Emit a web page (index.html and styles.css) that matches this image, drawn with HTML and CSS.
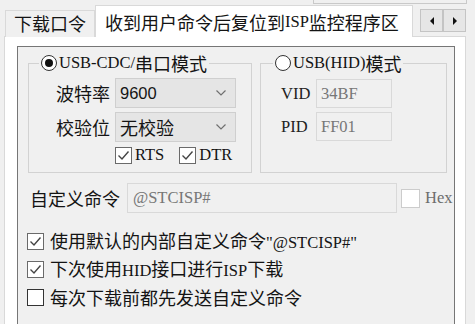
FILE: index.html
```html
<!DOCTYPE html>
<html lang="zh-CN">
<head>
  <meta charset="UTF-8">
  <meta name="viewport" content="width=device-width, initial-scale=1.0">
  <title>ISP 下载设置</title>
  <link rel="stylesheet" href="styles.css">
</head>
<body>
  <div class="top-edge"><div class="top-box"></div></div>

  <div class="tabs">
    <div class="tab">下载口令</div>
    <div class="tab active">收到用户命令后复位到<span class="m">ISP</span>监控程序区</div>
    <div class="tab-scroll">
      <span class="arrow">
        <svg width="6" height="8" viewBox="0 0 6 8"><path d="M5 0 L1 4 L5 8 Z" fill="#111"/></svg>
      </span>
      <span class="arrow">
        <svg width="6" height="8" viewBox="0 0 6 8"><path d="M1 0 L5 4 L1 8 Z" fill="#111"/></svg>
      </span>
    </div>
  </div>

  <div class="page">
    <div class="panel">
      <div class="groups">
        <fieldset class="group group-cdc">
          <legend><span class="radio on"></span><span class="m">USB-CDC/</span>串口模式</legend>
          <div class="fields">
            <label>波特率</label>
            <div class="combo">
              <span class="num">9600</span>
              <svg width="10" height="6" viewBox="0 0 10 6"><polyline points="0.5,0.5 5,5 9.5,0.5" fill="none" stroke="#707070" stroke-width="1.2"/></svg>
            </div>
            <label>校验位</label>
            <div class="combo">
              <span>无校验</span>
              <svg width="10" height="6" viewBox="0 0 10 6"><polyline points="0.5,0.5 5,5 9.5,0.5" fill="none" stroke="#707070" stroke-width="1.2"/></svg>
            </div>
            <div class="flags">
              <span class="check on">
                <svg width="15" height="15" viewBox="0 0 15 15"><polyline points="2.5,7.5 6,11 12.5,3.5" fill="none" stroke="#444" stroke-width="1.4"/></svg>
              </span>
              <span class="m flag-text">RTS</span>
              <span class="check on second">
                <svg width="15" height="15" viewBox="0 0 15 15"><polyline points="2.5,7.5 6,11 12.5,3.5" fill="none" stroke="#444" stroke-width="1.4"/></svg>
              </span>
              <span class="m flag-text">DTR</span>
            </div>
          </div>
        </fieldset>

        <fieldset class="group group-hid">
          <legend><span class="radio"></span><span class="m">USB(HID)</span>模式</legend>
          <div class="fields">
            <label class="m">VID</label>
            <div class="edit m">34BF</div>
            <label class="m">PID</label>
            <div class="edit m">FF01</div>
          </div>
        </fieldset>
      </div>

      <div class="cmd-row">
        <label>自定义命令</label>
        <div class="edit cmd m">@STCISP#</div>
        <span class="check hex"></span>
        <span class="m hex-text">Hex</span>
      </div>

      <ul class="options">
        <li>
          <span class="check on">
            <svg width="15" height="15" viewBox="0 0 15 15"><polyline points="2.5,7.5 6,11 12.5,3.5" fill="none" stroke="#444" stroke-width="1.4"/></svg>
          </span>
          <span>使用默认的内部自定义命令<span class="m">"@STCISP#"</span></span>
        </li>
        <li>
          <span class="check on">
            <svg width="15" height="15" viewBox="0 0 15 15"><polyline points="2.5,7.5 6,11 12.5,3.5" fill="none" stroke="#444" stroke-width="1.4"/></svg>
          </span>
          <span>下次使用<span class="m">HID</span>接口进行<span class="m">ISP</span>下载</span>
        </li>
        <li>
          <span class="check off"></span>
          <span>每次下载前都先发送自定义命令</span>
        </li>
      </ul>
    </div>
  </div>
</body>
</html>
```

FILE: styles.css
```css
* {
  box-sizing: border-box;
}

body {
  margin: 0;
  width: 475px;
  height: 324px;
  overflow: hidden;
  background: #f0f0f0;
  font-family: "Noto Sans CJK SC", sans-serif;
  font-size: 18px;
  line-height: 26px;
  color: #141414;
}

/* latin text in the old dialog font */
.m {
  font-family: "Liberation Serif", "Noto Sans CJK SC", serif;
  font-size: 16.5px;
}

.top-edge {
  height: 4px;
}

.top-box {
  margin-left: 313px;
  width: 154px;
  height: 4px;
  border: 1px solid #c9c9c9;
  border-top: none;
}

/* Tabs */
.tabs {
  display: flex;
  align-items: flex-end;
  height: 33px;
  padding-left: 5px;
}

.tab {
  height: 27px;
  padding: 0 8px 3px;
  display: flex;
  align-items: center;
  border: 1px solid #d9d9d9;
  border-bottom: none;
  background: #f0f0f0;
}

.tab.active {
  position: relative;
  z-index: 1;
  width: 318px;
  height: 32px;
  padding: 0 9px;
  background: #fff;
}

.tab-scroll {
  align-self: flex-start;
  margin: 5px 0 0 7px;
  display: flex;
}

.arrow {
  width: 23px;
  height: 23px;
  display: flex;
  align-items: center;
  justify-content: center;
  background: #e6e6e6;
  border: 1px solid #c4c4c4;
}

/* Page */
.page {
  margin: -1px 9px 0 4px;
  height: 300px;
  padding: 9px 10px 0 12px;
  background: #fff;
  border: 1px solid #d9d9d9;
}

.panel {
  height: 300px;
  padding: 3px 0 0 10px;
  background: #f0f0f0;
  border: 1px solid #767676;
}

.groups {
  display: flex;
  gap: 8px;
}

.group {
  margin: 0;
  padding: 0;
  min-width: 0;
  height: 123px;
  border: 1px solid #d2d2d2;
}

.group-cdc {
  width: 224px;
}

.group-hid {
  width: 187px;
}

.group legend {
  display: flex;
  align-items: center;
  height: 26px;
  margin-left: 10px;
  padding: 0 2px;
}

.group-hid legend {
  margin-left: 12px;
}

.radio {
  width: 16px;
  height: 16px;
  margin-right: 2px;
  border: 1px solid #333;
  border-radius: 50%;
  background: #fff;
  display: flex;
  align-items: center;
  justify-content: center;
}

.radio.on::after {
  content: "";
  width: 8px;
  height: 8px;
  border-radius: 50%;
  background: #111;
}

.fields {
  display: grid;
  align-items: center;
}

.group-cdc .fields {
  grid-template-columns: 55px 121px;
  grid-template-rows: 30px 30px 18px;
  column-gap: 5px;
  row-gap: 4px;
  padding: 2px 0 0 26px;
}

.group-hid .fields {
  grid-template-columns: 30px 76px;
  grid-template-rows: 29px 29px;
  column-gap: 5px;
  row-gap: 4px;
  padding: 3px 0 0 20px;
}

.fields label {
  text-align: right;
}

.group-hid .fields label {
  text-align: left;
  color: #222;
}

.combo {
  height: 30px;
  display: flex;
  align-items: center;
  justify-content: space-between;
  padding: 0 9px 0 4px;
  background: #e5e5e5;
  border: 1px solid #cfcfcf;
}

.num {
  font-family: "Liberation Sans", sans-serif;
  font-size: 16.5px;
}

.flags {
  grid-column: 2;
  display: flex;
  align-items: center;
}

.flag-text {
  margin-left: 3px;
}

.check {
  width: 17px;
  height: 17px;
  display: flex;
  align-items: center;
  justify-content: center;
  background: #fff;
  border: 1px solid #333;
}

.check.on {
  border-color: #6a6a6a;
}

.check.second {
  margin-left: 15px;
}

.edit {
  height: 100%;
  display: flex;
  align-items: center;
  padding-left: 4px;
  color: #777;
  background: #f0f0f0;
  border: 1px solid #d9d9d9;
}

/* custom command row */
.cmd-row {
  display: flex;
  align-items: center;
  margin-top: 10px;
  padding-left: 2px;
}

.cmd {
  width: 270px;
  height: 30px;
  margin-left: 7px;
  padding-left: 5px;
}

.check.hex {
  width: 19px;
  height: 19px;
  margin-left: 4px;
  border-color: #cccccc;
}

.hex-text {
  margin-left: 5px;
  color: #6d6d6d;
}

.options {
  list-style: none;
  margin: 14px 0 0 -1px;
  padding: 0;
}

.options li {
  height: 28px;
  display: flex;
  align-items: center;
  gap: 6px;
}
```
